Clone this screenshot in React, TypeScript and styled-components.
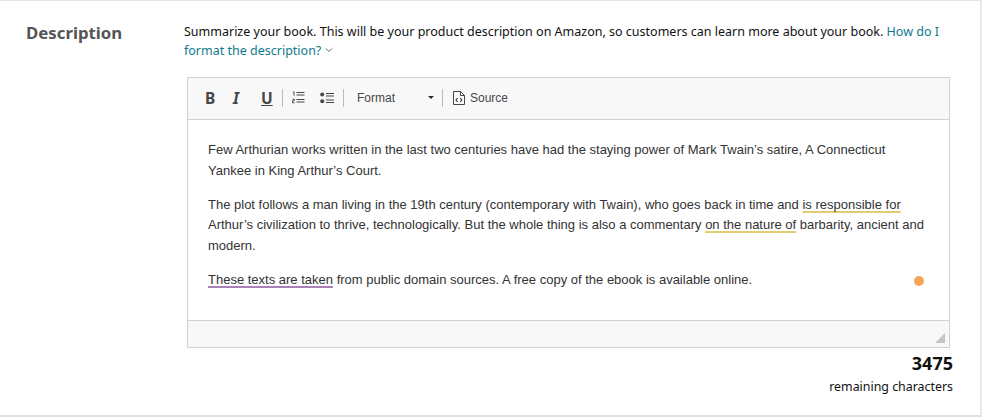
import React from 'react';
import styled, { createGlobalStyle } from 'styled-components';

const GlobalStyle = createGlobalStyle`
    html, body {
        margin: 0;
        padding: 0;
        background: #fff;
    }
`;

const Panel = styled.section`
    box-sizing: border-box;
    width: 982px;
    height: 417px;
    display: grid;
    grid-template-columns: 184px 766px;
    padding: 21px 0 0 0;
    border-top: 1px solid #e4e4e4;
    border-bottom: 2px solid #e0e0e0;
    border-right: 2px solid #e8e8e8;
    font-family: "Noto Sans", sans-serif;
    color: #111;
`;

const Heading = styled.h2`
    margin: 0;
    padding-left: 26px;
    font-size: 16.8px;
    line-height: 22px;
    font-weight: 700;
    color: #555;
`;

const Body = styled.div`
    display: flex;
    flex-direction: column;
`;

const Intro = styled.p`
    margin: 0 0 17px;
    font-size: 12.5px;
    line-height: 19px;
    color: #111;
`;

const HelpLink = styled.a`
    color: #0f7a8c;
`;

const Chevron = styled.svg`
    width: 8px;
    height: 6px;
    margin-left: 4px;
    vertical-align: 2px;
`;

const Editor = styled.div`
    box-sizing: border-box;
    margin-left: 3px;
    width: 763px;
    height: 271px;
    border: 1px solid #d1d1d1;
    display: flex;
    flex-direction: column;
    font-family: "Liberation Sans", Arial, sans-serif;
`;

const Toolbar = styled.div`
    height: 42px;
    flex: none;
    box-sizing: border-box;
    display: flex;
    align-items: center;
    padding: 0 0 2px 17px;
    background: #f8f8f8;
    border-bottom: 1px solid #d1d1d1;
`;

const ToolButton = styled.span<{ $width: number }>`
    width: ${props => props.$width}px;
    height: 20px;
    flex: none;
    display: flex;
    align-items: center;
    justify-content: flex-start;
    color: #474747;
`;

const Letter = styled.span<{ $italic?: boolean; $underline?: boolean }>`
    font-family: "Noto Sans", sans-serif;
    font-weight: 700;
    font-size: 15.5px;
    line-height: 20px;
    font-style: ${props => (props.$italic ? 'italic' : 'normal')};
    text-decoration: ${props => (props.$underline ? 'underline' : 'none')};
`;

const Divider = styled.span<{ $gap: number }>`
    width: 1px;
    height: 18px;
    flex: none;
    margin-right: ${props => props.$gap}px;
    background: #bcbcbc;
`;

const FormatSelect = styled.span`
    width: 85px;
    flex: none;
    display: flex;
    align-items: center;
    justify-content: space-between;
    padding-right: 8px;
    box-sizing: border-box;
    font-size: 12px;
    color: #484848;
`;

const Caret = styled.span`
    width: 0;
    height: 0;
    border-left: 3px solid transparent;
    border-right: 3px solid transparent;
    border-top: 3px solid #2b2b2b;
`;

const SourceLabel = styled.span`
    margin-left: 5px;
    font-size: 12px;
    color: #484848;
`;

const Content = styled.div`
    flex: 1;
    position: relative;
    box-sizing: border-box;
    padding: 20px 20px 0;
    font-size: 13px;
    line-height: 20.8px;
    color: #333;
`;

const Paragraph = styled.p`
    margin: 0 0 13px;
`;

const Marked = styled.span<{ $color: string }>`
    text-decoration: underline;
    text-decoration-color: ${props => props.$color};
    text-decoration-thickness: 2px;
    text-underline-offset: 2px;
    text-decoration-skip-ink: none;
`;

const StatusDot = styled.span`
    position: absolute;
    right: 25px;
    top: 156px;
    width: 10px;
    height: 10px;
    border-radius: 50%;
    background: #f8a558;
`;

const Footer = styled.div`
    height: 27px;
    flex: none;
    box-sizing: border-box;
    display: flex;
    align-items: flex-end;
    justify-content: flex-end;
    padding: 0 4px 4px 0;
    background: #f8f8f8;
    border-top: 1px solid #d1d1d1;
`;

const Counter = styled.div`
    width: 769px;
    text-align: right;
`;

const Count = styled.div`
    font-size: 18px;
    line-height: 24px;
    margin-top: 3px;
    font-weight: 700;
    color: #111;
`;

const CountLabel = styled.div`
    font-size: 12.4px;
    line-height: 18px;
    margin-top: 3px;
    color: #111;
`;

const OrderedIcon = () => (
    <svg width="13" height="13" viewBox="0 0 13 13" fill="none">
        <path d="M4.5 1.5h8M4.5 4h8M4.5 8.5h8M4.5 11h8" stroke="#474747" strokeWidth="1" />
        <path d="M.8 1.4 2 .8v4M.4 8.2h2v1.6H.5v2h2.2" stroke="#474747" strokeWidth=".9" />
    </svg>
);

const BulletIcon = () => (
    <svg width="14" height="12" viewBox="0 0 14 12" fill="none">
        <circle cx="2.2" cy="2.6" r="2" fill="#474747" />
        <circle cx="2.2" cy="9.2" r="2" fill="#474747" />
        <path d="M6 1.5h8M6 4h8M6 8h8M6 10.5h8" stroke="#474747" strokeWidth="1" />
    </svg>
);

const SourceIcon = () => (
    <svg width="12" height="14" viewBox="0 0 12 14" fill="none">
        <path d="M.5.5h7l4 4v9H.5z" stroke="#474747" strokeWidth="1" />
        <path d="M7.5.5v4h4" stroke="#474747" strokeWidth="1" />
        <path d="M4.6 7 3 9l1.6 2M7.2 7l1.6 2-1.6 2" stroke="#333" strokeWidth="1.1" />
    </svg>
);

const App = () => {
    return (
        <>
            <GlobalStyle />
            <Panel>
                <Heading>Description</Heading>
                <Body>
                    <Intro>
                        Summarize your book. This will be your product description on Amazon, so customers can learn more about your book.{' '}
                        <HelpLink>
                            How do I format the description?
                            <Chevron viewBox="0 0 8 6" fill="none">
                                <path d="M1 1.5 4 4.5 7 1.5" stroke="#666" strokeWidth="1" />
                            </Chevron>
                        </HelpLink>
                    </Intro>
                    <Editor>
                        <Toolbar>
                            <ToolButton $width={28}><Letter>B</Letter></ToolButton>
                            <ToolButton $width={28}><Letter $italic>I</Letter></ToolButton>
                            <ToolButton $width={21}><Letter $underline>U</Letter></ToolButton>
                            <Divider $gap={9} />
                            <ToolButton $width={28}><OrderedIcon /></ToolButton>
                            <ToolButton $width={23}><BulletIcon /></ToolButton>
                            <Divider $gap={13} />
                            <FormatSelect>Format<Caret /></FormatSelect>
                            <Divider $gap={10} />
                            <SourceIcon />
                            <SourceLabel>Source</SourceLabel>
                        </Toolbar>
                        <Content>
                            <Paragraph>
                                Few Arthurian works written in the last two centuries have had the staying power of Mark Twain’s satire, A Connecticut Yankee in King Arthur’s Court.
                            </Paragraph>
                            <Paragraph>
                                The plot follows a man living in the 19th century (contemporary with Twain), who goes back in time and{' '}
                                <Marked $color="#e3cc73">is responsible for</Marked> Arthur’s civilization to thrive, technologically. But the whole thing is also a commentary{' '}
                                <Marked $color="#e3cc73">on the nature of</Marked> barbarity, ancient and modern.
                            </Paragraph>
                            <Paragraph>
                                <Marked $color="#ab7fb8">These texts are taken</Marked> from public domain sources. A free copy of the ebook is available online.
                            </Paragraph>
                            <StatusDot />
                        </Content>
                        <Footer>
                            <svg width="10" height="10" viewBox="0 0 10 10">
                                <path d="M10 0v10H0z" fill="#c4c4c4" />
                            </svg>
                        </Footer>
                    </Editor>
                    <Counter>
                        <Count>3475</Count>
                        <CountLabel>remaining characters</CountLabel>
                    </Counter>
                </Body>
            </Panel>
        </>
    );
};

export default App;
